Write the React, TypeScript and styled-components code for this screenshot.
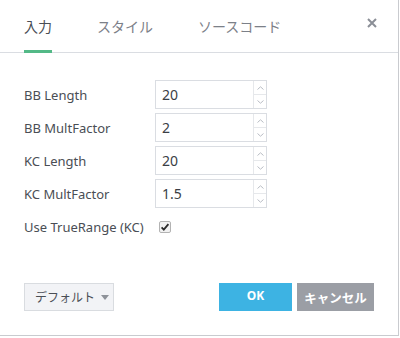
import React, { useState } from 'react';
import styled, { createGlobalStyle } from 'styled-components';

const GlobalStyle = createGlobalStyle`
  body {
    margin: 0;
    background: #ffffff;
    font-family: "Noto Sans", "Noto Sans CJK JP", sans-serif;
  }
`;

const Dialog = styled.div`
  width: 398px;
  height: 335px;
  border-right: 1px solid #c9cbcf;
  border-bottom: 1px solid #c9cbcf;
  background: #ffffff;
  display: flex;
  flex-direction: column;
`;

const Header = styled.div`
  height: 52px;
  border-bottom: 1px solid #dadde2;
  display: flex;
  align-items: stretch;
  gap: 45px;
  padding: 0 21px 0 24px;
`;

const Tab = styled.div<{ active?: boolean }>`
  position: relative;
  display: flex;
  align-items: center;
  font-size: 14px;
  color: ${({ active }) => (active ? '#4a4e55' : '#7c8088')};
  cursor: pointer;
  ${({ active }) =>
    active &&
    `
    &::after {
      content: '';
      position: absolute;
      left: 0;
      right: 0;
      bottom: -1px;
      height: 3px;
      background: #53b987;
    }
  `}
`;

const CloseButton = styled.div`
  margin-left: auto;
  display: flex;
  align-items: center;
  padding-bottom: 6px;
  cursor: pointer;
`;

const Body = styled.div`
  padding: 27px 24px 0 24px;
  display: grid;
  grid-template-columns: 131px 112px;
  grid-auto-rows: 29px;
  row-gap: 4px;
  align-items: center;
`;

const Label = styled.div`
  font-size: 13px;
  color: #4a4e55;
  white-space: nowrap;
`;

const InputBox = styled.div`
  height: 29px;
  box-sizing: border-box;
  border: 1px solid #dadde2;
  display: flex;
`;

const NumberInput = styled.input`
  flex: 1;
  min-width: 0;
  border: none;
  outline: none;
  padding: 0 6px;
  font-family: inherit;
  font-size: 14px;
  color: #3a3e45;
  background: transparent;
`;

const Spinner = styled.div`
  width: 12px;
  border-left: 1px solid #e6e8eb;
  display: flex;
  flex-direction: column;
`;

const SpinHalf = styled.div<{ top?: boolean }>`
  flex: 1;
  display: flex;
  align-items: center;
  justify-content: center;
  ${({ top }) => top && 'border-bottom: 1px solid #e6e8eb;'}
`;

const CheckCell = styled.div`
  display: flex;
  align-items: center;
  padding-left: 4px;
`;

const Footer = styled.div`
  margin-top: auto;
  padding: 0 24px 24px 24px;
  display: flex;
  align-items: center;
`;

const DefaultButton = styled.div`
  width: 90px;
  height: 28px;
  box-sizing: border-box;
  border: 1px solid #d9dce0;
  background: #f2f3f6;
  display: flex;
  align-items: center;
  padding-left: 10px;
  gap: 6px;
  font-size: 12px;
  color: #4a4e55;
  white-space: nowrap;
`;

const Caret = styled.span`
  width: 0;
  height: 0;
  border-left: 4px solid transparent;
  border-right: 4px solid transparent;
  border-top: 5px solid #8e9299;
  margin-top: 1px;
`;

const ActionButton = styled.div<{ kind: 'ok' | 'cancel' }>`
  height: 28px;
  width: ${({ kind }) => (kind === 'ok' ? '73px' : '77px')};
  margin-left: ${({ kind }) => (kind === 'ok' ? 'auto' : '5px')};
  background: ${({ kind }) => (kind === 'ok' ? '#3db3e3' : '#9b9ea5')};
  color: #ffffff;
  font-weight: bold;
  font-size: ${({ kind }) => (kind === 'ok' ? '12px' : '12.5px')};
  display: flex;
  align-items: center;
  justify-content: center;
  padding-bottom: ${({ kind }) => (kind === 'ok' ? '4px' : '0')};
  box-sizing: border-box;
  white-space: nowrap;
  cursor: pointer;
`;

const fields = [
  { label: 'BB Length', value: '20' },
  { label: 'BB MultFactor', value: '2' },
  { label: 'KC Length', value: '20' },
  { label: 'KC MultFactor', value: '1.5' },
];

function Arrow({ up }: { up?: boolean }) {
  return (
    <svg width="7" height="4" viewBox="0 0 7 4">
      <path
        d={up ? 'M0.5 3.5 L3.5 0.8 L6.5 3.5' : 'M0.5 0.5 L3.5 3.2 L6.5 0.5'}
        fill="none"
        stroke="#b9bdc4"
        strokeWidth="1"
      />
    </svg>
  );
}

function Checkbox() {
  return (
    <svg width="12" height="12" viewBox="0 0 12 12">
      <rect x="0.5" y="0.5" width="11" height="11" rx="1.5" fill="#f1f1f1" stroke="#b3b3b3" />
      <path d="M2.6 6.4 L4.8 8.6 L9.4 3.2" fill="none" stroke="#2a2a2a" strokeWidth="1.8" />
    </svg>
  );
}

export default function App() {
  const [tab, setTab] = useState(0);
  const tabs = ['入力', 'スタイル', 'ソースコード'];

  return (
    <>
      <GlobalStyle />
      <Dialog>
        <Header>
          {tabs.map((name, i) => (
            <Tab key={name} active={tab === i} onClick={() => setTab(i)}>
              {name}
            </Tab>
          ))}
          <CloseButton>
            <svg width="10" height="10" viewBox="0 0 10 10">
              <path d="M1 1 L9 9 M9 1 L1 9" stroke="#8b8f97" strokeWidth="2" />
            </svg>
          </CloseButton>
        </Header>

        <Body>
          {fields.map((f) => (
            <React.Fragment key={f.label}>
              <Label>{f.label}</Label>
              <InputBox>
                <NumberInput defaultValue={f.value} />
                <Spinner>
                  <SpinHalf top>
                    <Arrow up />
                  </SpinHalf>
                  <SpinHalf>
                    <Arrow />
                  </SpinHalf>
                </Spinner>
              </InputBox>
            </React.Fragment>
          ))}
          <Label>Use TrueRange (KC)</Label>
          <CheckCell>
            <Checkbox />
          </CheckCell>
        </Body>

        <Footer>
          <DefaultButton>
            デフォルト
            <Caret />
          </DefaultButton>
          <ActionButton kind="ok">OK</ActionButton>
          <ActionButton kind="cancel">キャンセル</ActionButton>
        </Footer>
      </Dialog>
    </>
  );
}
